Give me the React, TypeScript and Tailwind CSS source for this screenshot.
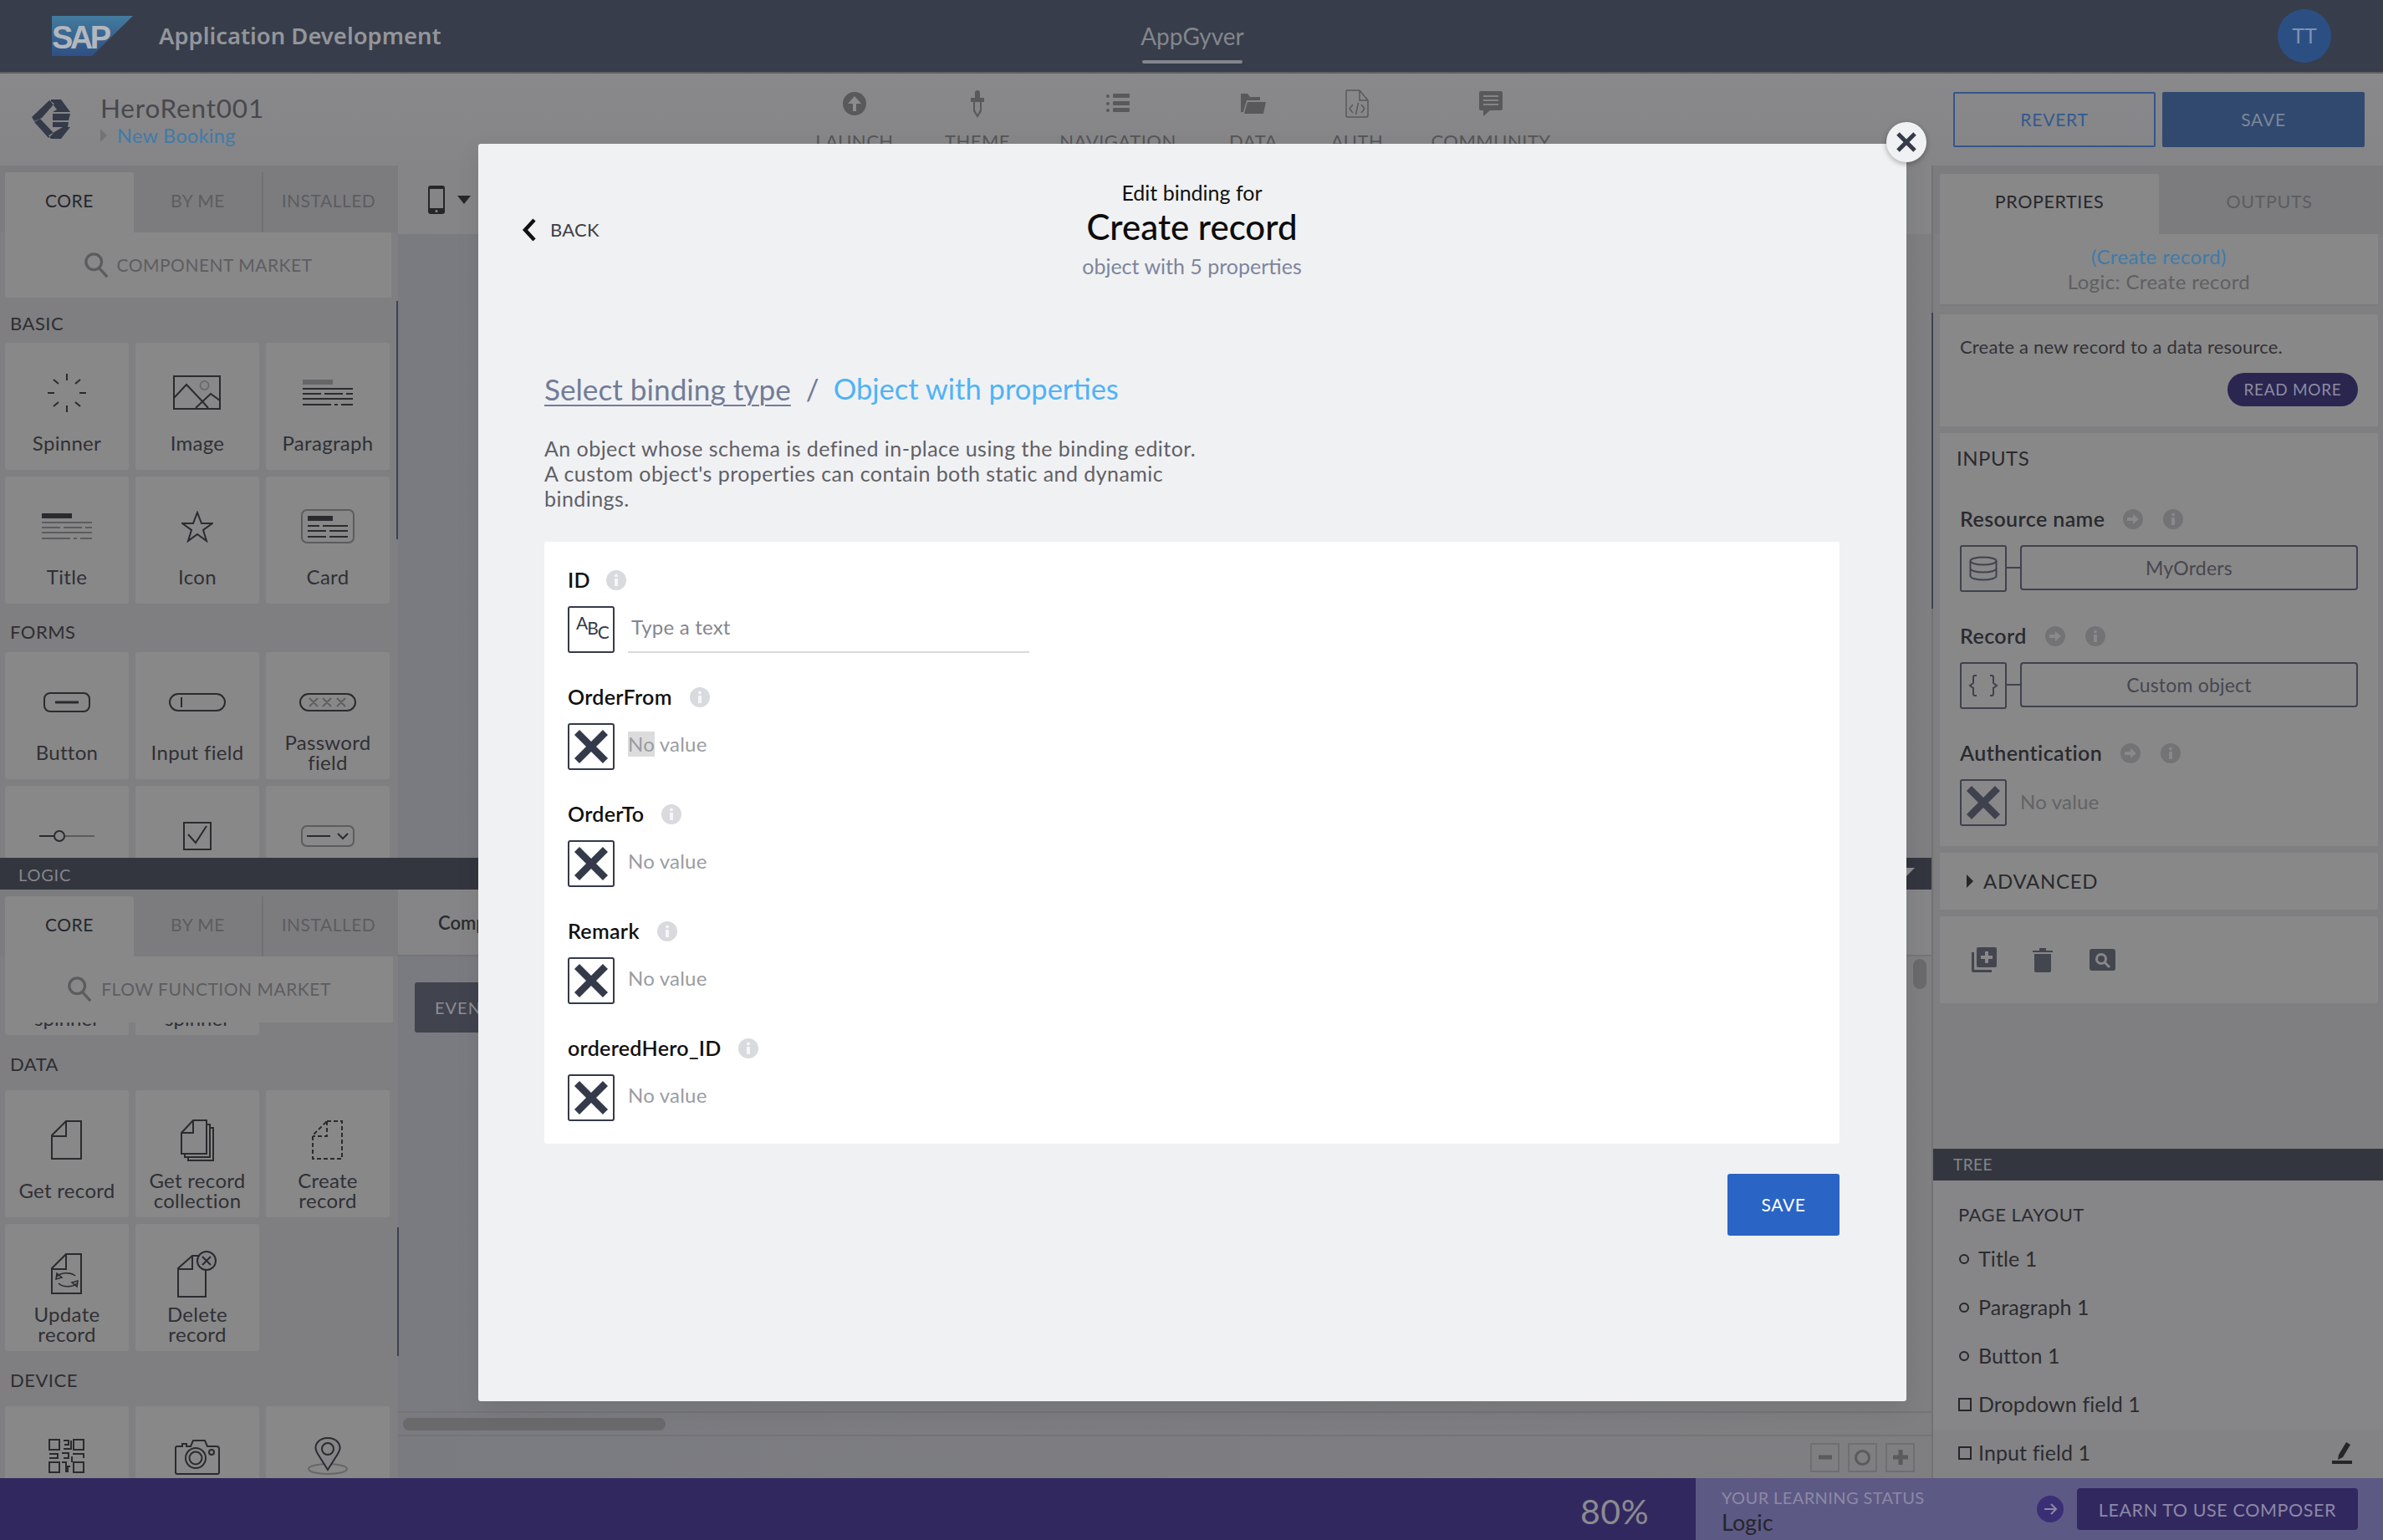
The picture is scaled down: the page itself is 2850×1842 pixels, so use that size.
import React from 'react';

const sans = { fontFamily: 'Lato, "Noto Sans", sans-serif' };

const Ink = '#2b2b2f';

// icons of the component library
const IconSpinner = () => (
  <svg width="48" height="48" viewBox="0 0 48 48" stroke={Ink} strokeWidth="2">
    <path d="M24 1v8M24 39v8M1 24h8M39 24h8M8 8l6 5M40 8l-6 5M8 40l6-5M40 40l-6-5" />
  </svg>
);
const IconImage = () => (
  <svg width="58" height="42" viewBox="0 0 58 42" fill="none" stroke={Ink} strokeWidth="2">
    <rect x="1" y="1" width="55" height="39" />
    <path d="M1 27L16 11l18 19 8 9M27 39l18-17 11 8" />
    <circle cx="37.500" cy="12" r="5" stroke="#6a6a6c" />
  </svg>
);
const TextLines = ({ head, body }: { head: string; body: string }) => (
  <svg width="60" height="32" viewBox="0 0 60 32" stroke={body} strokeWidth="2">
    <rect x="0" y="0" width="36" height="6" fill={head} stroke="none" />
    <path d="M0 11h60M0 17h22M26 17h22M52 17h8M0 23h60M0 30h34M38 30h4M46 30h14" />
  </svg>
);
const IconStar = () => (
  <svg width="38" height="38" viewBox="0 0 38 38" fill="none" stroke={Ink} strokeWidth="2">
    <path d="M19 2l5 13h13L26 23l4 13-11-8-11 8 4-13L1 15h13z" />
  </svg>
);
const IconCard = () => (
  <svg width="64" height="42" viewBox="0 0 64 42" fill="none">
    <rect x="1" y="1" width="62" height="39" rx="6" stroke="#5c5c5e" strokeWidth="2" />
    <rect x="8" y="8" width="30" height="6" fill={Ink} />
    <path d="M8 20h14M26 20h30M8 26h22M34 26h22M8 33h22M34 33h22" stroke={Ink} strokeWidth="2" />
  </svg>
);
const IconButton = () => (
  <svg width="56" height="24" viewBox="0 0 56 24" fill="none" stroke={Ink} strokeWidth="2">
    <rect x="1" y="1" width="54" height="22" rx="7" />
    <path d="M14 12h28" strokeWidth="3" />
  </svg>
);
const IconInput = () => (
  <svg width="68" height="22" viewBox="0 0 68 22" fill="none" stroke={Ink} strokeWidth="2">
    <rect x="1" y="1" width="66" height="20" rx="10" />
    <path d="M15 5v12" />
  </svg>
);
const IconPassword = () => (
  <svg width="68" height="22" viewBox="0 0 68 22" fill="none" stroke={Ink} strokeWidth="2">
    <rect x="1" y="1" width="66" height="20" rx="10" />
    <path d="M12 6l10 10M22 6L12 16M28 6l10 10M38 6L28 16M45 6l10 10M55 6L45 16" stroke="#5f5f61" />
  </svg>
);
const IconSlider = () => (
  <svg width="66" height="18" viewBox="0 0 66 18" fill="none">
    <path d="M0 9h18" stroke={Ink} strokeWidth="2" />
    <path d="M30 9h36" stroke="#5c5c5e" strokeWidth="2" />
    <circle cx="24" cy="9" r="6" stroke={Ink} strokeWidth="2" />
  </svg>
);
const IconCheckbox = () => (
  <svg width="34" height="34" viewBox="0 0 34 34" fill="none" stroke={Ink} strokeWidth="2">
    <rect x="1" y="1" width="32" height="32" />
    <path d="M6 15l9 10 13-20" />
  </svg>
);
const IconDropdown = () => (
  <svg width="64" height="26" viewBox="0 0 64 26" fill="none">
    <rect x="1" y="1" width="62" height="24" rx="6" stroke="#5c5c5e" strokeWidth="2" />
    <path d="M7 13h28M44 10l6 6 6-6" stroke={Ink} strokeWidth="2" />
  </svg>
);
const IconDoc = ({ dash }: { dash?: boolean }) => (
  <svg width="38" height="48" viewBox="0 0 38 48" fill="none" stroke={Ink} strokeWidth="2" strokeDasharray={dash ? '5 3' : undefined}>
    <path d="M18 1h18v45H1V18z" />
    <path d="M18 1v18H1" />
  </svg>
);
const IconDocs = () => (
  <svg width="40" height="50" viewBox="0 0 40 50" fill="none" stroke={Ink} strokeWidth="2">
    <path d="M15 1h16v40H1V16zM15 1v15H1" />
    <path d="M31 6h4v39H5v-4M35 10h4v39H9v-4" />
  </svg>
);
const IconUpdate = () => (
  <svg width="38" height="50" viewBox="0 0 38 50" fill="none" stroke={Ink} strokeWidth="2">
    <path d="M18 1h18v47H1V18z" />
    <path d="M18 1v18H1" />
    <path d="M7 28c4-5 16-6 22-1M31 36c-5 5-17 5-22 0" strokeWidth="1.500" />
    <path d="M7 24l6 5-7 2zM31 40l-6-5 7-2z" strokeWidth="1.500" />
  </svg>
);
const IconDelete = () => (
  <svg width="48" height="56" viewBox="0 0 48 56" fill="none" stroke={Ink} strokeWidth="2">
    <path d="M18 6h16v49H1V21zM18 6v16H1" />
    <circle cx="35" cy="12" r="11" fill="#868688" />
    <path d="M30 7l10 10M40 7L30 17" />
  </svg>
);
const IconQr = () => (
  <svg width="44" height="42" viewBox="0 0 44 42" fill="none" stroke={Ink} strokeWidth="2">
    <rect x="1" y="1" width="12" height="12" />
    <rect x="30" y="1" width="12" height="12" />
    <rect x="1" y="28" width="12" height="12" />
    <rect x="30" y="28" width="12" height="12" />
    <path d="M18 2h6v5h-5M27 2v10h-9M1 18h10v5H1M16 17h8v6h-6M29 18h13v5M28 21v7M16 28h5v12M26 33h-3v7" />
  </svg>
);
const IconCamera = () => (
  <svg width="54" height="44" viewBox="0 0 54 44" fill="none" stroke={Ink} strokeWidth="2">
    <path d="M3 10h6V7h5v3h5l3-7h14l3 7h11a3 3 0 013 3v28a2 2 0 01-2 2H3a2 2 0 01-2-2V12a2 2 0 012-2z" />
    <circle cx="25" cy="24" r="12" />
    <circle cx="25" cy="24" r="7.500" />
    <circle cx="44" cy="17" r="3" />
  </svg>
);
const IconPin = () => (
  <svg width="48" height="46" viewBox="0 0 48 46" fill="none" stroke={Ink} strokeWidth="2">
    <ellipse cx="24" cy="38" rx="23" ry="6" stroke="#666668" />
    <path fill="#868688" d="M24 39L12 20c-7-11 2-19 12-19s19 8 12 19z" />
    <circle cx="24" cy="14" r="7" />
  </svg>
);

const Tile = ({ label, icon }: { label: string; icon: React.ReactNode }) => (
  <div className="w-[148px] h-[152px] rounded-[3px] bg-[#888889] flex flex-col items-center shrink-0">
    <div className="mt-[24px] h-[72px] flex items-center justify-center">{icon}</div>
    <div className="h-[48px] flex items-center justify-center text-center text-[24px] leading-[24px] tracking-[0.3px] text-[#303034] px-2">{label}</div>
  </div>
);

const Row = ({ children }: { children: React.ReactNode }) => (
  <div className="flex gap-[8px] pl-[6px] mb-[8px]">{children}</div>
);

const Heading = ({ children, className }: { children: string; className: string }) => (
  <div className={`pl-[12px] text-[22px] leading-[24px] text-[#2e2e32] tracking-[0.5px] ${className}`}>{children}</div>
);

const LibTabs = () => (
  <div className="h-[80px] flex bg-[#7c7c7e] text-[21px] tracking-[0.5px] shrink-0">
    <div className="ml-[6px] mt-[8px] w-[154px] h-[72px] rounded-t-[3px] bg-[#888889] flex items-center justify-center pb-[4px] text-[#26262a]">CORE</div>
    <div className="w-[155px] mt-[8px] h-[72px] border-r-2 border-[#727274] flex items-center justify-center pb-[4px] text-[#5d5d60]">BY ME</div>
    <div className="flex-1 mt-[8px] h-[72px] flex items-center justify-center pb-[4px] pr-[5px] text-[#5d5d60]">INSTALLED</div>
  </div>
);

const SearchGlass = () => (
  <svg width="30" height="32" viewBox="0 0 32 34" fill="none" stroke="#5c5c5f" strokeWidth="3.500">
    <circle cx="13" cy="13" r="10" />
    <path d="M20 21l10 11" />
  </svg>
);

const NavItem = ({ w, label, icon }: { w: string; label: string; icon: React.ReactNode }) => (
  <div className={`${w} h-[110px] flex flex-col items-center text-[#555558] shrink-0`}>
    <div className="h-[36px] mt-[18px] flex items-center justify-center">{icon}</div>
    <div className="mt-[13px] text-[22px] leading-[28px] tracking-[0.5px]">{label}</div>
  </div>
);

const InfoDot = ({ bg, fg, className }: { bg: string; fg: string; className: string }) => (
  <svg className={className} width="24" height="24" viewBox="0 0 24 24">
    <circle cx="12" cy="12" r="12" fill={bg} />
    <circle cx="12" cy="6.500" r="2" fill={fg} />
    <rect x="10" y="10" width="4" height="9" fill={fg} />
  </svg>
);

const ArrowDot = ({ className }: { className: string }) => (
  <svg className={className} width="24" height="24" viewBox="0 0 24 24">
    <circle cx="12" cy="12" r="12" fill="#737375" />
    <path d="M5 10h7V6l7 6-7 6v-4H5z" fill="#89898b" />
  </svg>
);

const BoxX = ({ stroke = '#343a4a' }: { stroke?: string }) => (
  <div className="w-[56px] h-[56px] rounded-[3px] border-2 flex items-center justify-center shrink-0" style={{ borderColor: stroke }}>
    <svg width="42" height="42" viewBox="0 0 42 42" stroke={stroke} strokeWidth="8.500">
      <path d="M4 4l34 34M38 4L4 38" />
    </svg>
  </div>
);

const Field = ({ label, info, children }: { label: string; info: string; children: React.ReactNode }) => (
  <div className="h-[140px] flex flex-col">
    <div className="h-[28px] flex items-center text-[25px] font-semibold text-[#111] tracking-[0.3px]">
      <span>{label}</span>
      <InfoDot bg="#d8dade" fg="#f5f6f7" className={info} />
    </div>
    <div className="mt-[17px] flex items-center">{children}</div>
  </div>
);

const NoValue = ({ mark }: { mark?: boolean }) => (
  <div className="ml-[16px] h-[56px] pb-[6px] flex items-center text-[24px] tracking-[0.2px] text-[#9a9ca3]">
    {mark ? <span className="bg-[#dcdcdc] leading-[30px]">No</span> : <span>No</span>}
    <span>&nbsp;value</span>
  </div>
);

const PropLabel = ({ label }: { label: string }) => (
  <div className="h-[28px] flex items-center text-[25px] font-semibold text-[#2a2a2e] tracking-[0.4px]">
    <span>{label}</span>
    <ArrowDot className="ml-[22px]" />
    <InfoDot bg="#737375" fg="#89898b" className="ml-[24px]" />
  </div>
);

const BoundValue = ({ icon, text }: { icon: React.ReactNode; text: string }) => (
  <div className="flex items-start">
    <div className="w-[56px] h-[56px] rounded-[3px] border-2 border-[#3f424e] flex items-center justify-center">{icon}</div>
    <div className="w-[16px] h-[2px] bg-[#3f424e] mt-[26px]" />
    <div className="w-[404px] h-[54px] rounded-[4px] border-2 border-[#3f424e] flex items-center justify-center text-[23px] tracking-[0.2px] text-[#46474f]">{text}</div>
  </div>
);

const TreeRow = ({ label, square, active }: { label: string; square?: boolean; active?: boolean }) => (
  <div className={`h-[58px] pl-[30px] pb-[2px] flex items-center text-[25px] tracking-[0.1px] text-[#2c2c30] ${active ? 'bg-[#838385]' : ''}`}>
    {square ? (
      <div className="w-[16px] h-[16px] border-2 border-[#26262a] mr-[8px]" />
    ) : (
      <div className="w-[12px] h-[12px] rounded-full border-2 border-[#26262a] mx-[1px] mr-[11px]" />
    )}
    <span>{label}</span>
    {active && (
      <svg className="ml-auto mr-[36px]" width="26" height="26" viewBox="0 0 26 26" fill="#26262a">
        <path d="M18 0l5 3-9 15-6 3 1-6z" />
        <rect x="1" y="22" width="24" height="4" />
      </svg>
    )}
  </div>
);

const App = () => {
  return (
    <div className="relative w-[2850px] h-[1842px] overflow-hidden flex flex-col bg-[#7d7d80]" style={sans}>
      {/* top bar */}
      <div className="h-[88px] shrink-0 bg-[#373d4a] border-b-2 border-[#5d5f64] flex items-center">
        <svg className="ml-[62px]" width="97" height="48" viewBox="0 0 97 48">
          <defs>
            <linearGradient id="sapFill" x1="0" y1="0" x2="0" y2="1">
              <stop offset="0" stopColor="#437c9f" />
              <stop offset="1" stopColor="#2f4f84" />
            </linearGradient>
          </defs>
          <path d="M0 0h97L48 48H0z" fill="url(#sapFill)" />
          <text x="0" y="39" fontFamily="Liberation Sans" fontWeight="700" fontSize="38" letterSpacing="-3.500" fill="#b3b7bd">SAP</text>
        </svg>
        <div className="ml-[31px] w-[1176px] shrink-0 text-[27.400px] font-semibold text-[#93959b]" style={{ fontFamily: '"Noto Sans", sans-serif' }}>Application Development</div>
        <div className="relative h-[86px] w-[120px] shrink-0 flex items-center justify-center whitespace-nowrap text-[28px] text-[#83868d]">
          AppGyver
          <div className="absolute left-0 right-0 bottom-[10px] h-[4px] rounded-full bg-[#83868d]" />
        </div>
        <div className="ml-auto mr-[62px] w-[64px] h-[64px] rounded-full bg-[#2c4f83] flex items-center justify-center text-[25px] text-[#7f92ad]">TT</div>
      </div>

      {/* toolbar */}
      <div className="h-[110px] shrink-0 flex bg-gradient-to-b from-[#89898b] to-[#858587]">
        <div className="w-[949px] shrink-0 flex items-center pl-[38px]">
          <svg width="46" height="48" viewBox="0 0 46 48" fill="#343a48">
            <path d="M23 0h12l11 15H25l5-3-7-9zM25 17h21l-2 8H25zM25 27h19l-1 6H25zM46 33L35 47H23l-3-4 17-10zM21 1L0 21l3 5 9-4 15-17zM3 27l17 19 6-6-16-17z" />
          </svg>
          <div className="ml-[36px]">
            <div className="text-[31.500px] leading-[38px] text-[#48484c] tracking-[0.8px]">HeroRent001</div>
            <div className="flex items-center text-[23.500px] leading-[28px] text-[#3f7ba8] tracking-[0.3px]">
              <div className="w-0 h-0 border-y-[8px] border-y-transparent border-l-[8px] border-l-[#737375] mr-[12px]" />
              New Booking
            </div>
          </div>
        </div>
        <NavItem w="w-[146px]" label="LAUNCH" icon={
          <svg width="28" height="28" viewBox="0 0 28 28"><circle cx="14" cy="14" r="14" fill="#59595c" /><path d="M14 5l8 9h-6v9h-4v-9H6z" fill="#8c8c8e" /></svg>
        } />
        <NavItem w="w-[148px]" label="THEME" icon={
          <svg width="16" height="34" viewBox="0 0 16 34" fill="#59595c"><path d="M5 4a3 3 0 016 0v6h5v5h-3v11l-5 8-5-8V15H0v-5h5z" /><path d="M5 15h6v10l-3 5-3-5z" fill="#858587" /></svg>
        } />
        <NavItem w="w-[188px]" label="NAVIGATION" icon={
          <svg width="28" height="24" viewBox="0 0 28 24" fill="#59595c"><circle cx="2" cy="3" r="2" /><circle cx="2" cy="12" r="2" /><circle cx="2" cy="20" r="2" /><rect x="8" y="0" width="20" height="5" rx="1" /><rect x="8" y="9" width="20" height="5" rx="1" /><rect x="8" y="17" width="20" height="5" rx="1" /></svg>
        } />
        <NavItem w="w-[136px]" label="DATA" icon={
          <svg width="30" height="24" viewBox="0 0 30 24" fill="#59595c"><path d="M0 0h8l3 4h12v4H7L3 22H0z" /><path d="M8 10h22l-3 14H4z" /></svg>
        } />
        <NavItem w="w-[112px]" label="AUTH" icon={
          <svg width="28" height="34" viewBox="0 0 28 34" fill="none" stroke="#59595c" strokeWidth="1.500"><path d="M3 1h14l10 12v18a2 2 0 01-2 2H3a2 2 0 01-2-2V3a2 2 0 012-2zM17 1v12h10M9 18l-4 5 4 5M19 18l4 5-4 5M15.500 16l-3 14" /></svg>
        } />
        <NavItem w="w-[208px]" label="COMMUNITY" icon={
          <svg width="28" height="30" viewBox="0 0 28 30" fill="#59595c"><path d="M2 0h24a2 2 0 012 2v19a2 2 0 01-2 2H13l-8 7v-7H2a2 2 0 01-2-2V2a2 2 0 012-2z" /><path d="M5 6h18M5 11h18M5 16h18" stroke="#858587" strokeWidth="2" /></svg>
        } />
        <div className="ml-auto mr-[22px] mt-[22px] flex gap-[8px]">
          <div className="w-[242px] h-[66px] rounded-[2px] border-2 border-[#33558b] flex items-center justify-center text-[21px] tracking-[0.8px] text-[#335a90]">REVERT</div>
          <div className="w-[242px] h-[66px] rounded-[2px] bg-[#31496f] flex items-center justify-center text-[21px] tracking-[0.8px] text-[#7b8698]">SAVE</div>
        </div>
      </div>

      {/* workspace */}
      <div className="h-[1570px] shrink-0 flex">
        {/* left: libraries */}
        <div className="w-[476px] shrink-0 flex flex-col bg-[#7f7f81]">
          <div className="h-[828px] shrink-0 overflow-hidden">
            <LibTabs />
            <div className="ml-[6px] w-[462px] h-[78px] bg-[#888889] flex items-center justify-center text-[21px] text-[#5d5d60] tracking-[0.5px]">
              <SearchGlass />
              <span className="ml-[9px]">COMPONENT MARKET</span>
            </div>
            <Heading className="mt-[19px] mb-[11px]">BASIC</Heading>
            <Row>
              <Tile label="Spinner" icon={<IconSpinner />} />
              <Tile label="Image" icon={<IconImage />} />
              <Tile label="Paragraph" icon={<TextLines head="#666668" body={Ink} />} />
            </Row>
            <Row>
              <Tile label="Title" icon={<TextLines head={Ink} body="#5c5c5e" />} />
              <Tile label="Icon" icon={<IconStar />} />
              <Tile label="Card" icon={<IconCard />} />
            </Row>
            <Heading className="mt-[22px] mb-[12px]">FORMS</Heading>
            <Row>
              <Tile label="Button" icon={<IconButton />} />
              <Tile label="Input field" icon={<IconInput />} />
              <Tile label="Password field" icon={<IconPassword />} />
            </Row>
            <Row>
              <Tile label="Slider" icon={<IconSlider />} />
              <Tile label="Checkbox" icon={<IconCheckbox />} />
              <Tile label="Dropdown" icon={<IconDropdown />} />
            </Row>
          </div>
          <div className="h-[38px] shrink-0 bg-[#34363f] pl-[22px] pt-[2px] flex items-center text-[20px] tracking-[0.8px] text-[#85868b]">LOGIC</div>
          <div className="flex-1 overflow-hidden">
            <LibTabs />
            <div className="ml-[6px] w-[464px] h-[79px] pb-[2px] bg-[#888889] flex items-center justify-center text-[21px] text-[#5d5d60] tracking-[0.5px]">
              <SearchGlass />
              <span className="ml-[11px]">FLOW FUNCTION MARKET</span>
            </div>
            <div className="flex gap-[8px] pl-[6px]">
              <div className="w-[148px] h-[15px] rounded-b-[3px] bg-[#888889] overflow-hidden flex justify-center text-[24px] leading-[24px] text-[#303034]"><span className="-mt-[17px]">spinner</span></div>
              <div className="w-[148px] h-[15px] rounded-b-[3px] bg-[#888889] overflow-hidden flex justify-center text-[24px] leading-[24px] text-[#303034]"><span className="-mt-[17px]">spinner</span></div>
            </div>
            <Heading className="mt-[23px] mb-[19px]">DATA</Heading>
            <Row>
              <Tile label="Get record" icon={<IconDoc />} />
              <Tile label="Get record collection" icon={<IconDocs />} />
              <Tile label="Create record" icon={<IconDoc dash />} />
            </Row>
            <Row>
              <Tile label="Update record" icon={<IconUpdate />} />
              <Tile label="Delete record" icon={<IconDelete />} />
            </Row>
            <Heading className="mt-[23px] mb-[19px]">DEVICE</Heading>
            <Row>
              <Tile label="QR code" icon={<IconQr />} />
              <Tile label="Camera" icon={<IconCamera />} />
              <Tile label="Location" icon={<IconPin />} />
            </Row>
          </div>
        </div>

        {/* middle: canvas */}
        <div className="w-[1836px] shrink-0 flex flex-col bg-gradient-to-r from-[#7a7b80] to-[#7f7f82] border-r-2 border-[#727274]">
          <div className="h-[82px] shrink-0 bg-[#858587] pl-[36px] flex items-center">
            <svg width="20" height="34" viewBox="0 0 20 34"><rect x="0" y="0" width="20" height="34" rx="3" fill="#26262a" /><rect x="2" y="4" width="16" height="23" fill="#858587" /><circle cx="10" cy="30.500" r="1.500" fill="#858587" /></svg>
            <div className="ml-[15px] w-0 h-0 border-x-[8px] border-x-transparent border-t-[10px] border-t-[#26262a]" />
          </div>
          <div className="h-[746px] shrink-0" />
          <div className="h-[38px] shrink-0 bg-[#34363f] flex justify-end">
            <div className="w-[32px] h-[38px] flex items-start">
              <div className="w-0 h-0 mt-[12px] border-r-[12px] border-r-transparent border-t-[12px] border-t-[#8d8d90]" />
            </div>
          </div>
          <div className="h-[80px] shrink-0 bg-[#858587] border-b-2 border-[#747476] pl-[48px] flex items-center text-[22px] text-[#2b2b2f] font-semibold">Component</div>
          <div className="h-[544px] shrink-0 relative pl-[20px] pt-[31px]">
            <div className="w-[120px] h-[60px] rounded-[3px] bg-[#41434f] flex items-center pl-[24px] text-[20px] tracking-[1px] text-[#8c8d93]">EVENT</div>
            <div className="absolute right-[6px] top-[3px] w-[16px] h-[36px] rounded-full bg-[#6a6a6c]" />
          </div>
          <div className="h-[30px] shrink-0 border-y-2 border-[#747476] flex items-center pl-[6px]">
            <div className="w-[314px] h-[15px] rounded-full bg-[#6a6a6c]" />
          </div>
          <div className="flex-1 flex justify-end items-center pr-[20px] gap-[10px]">
            <div className="w-[35px] h-[35px] border-2 border-[#6f6f71] flex items-center justify-center">
              <svg width="20" height="20" viewBox="0 0 20 20" fill="none" stroke="#5b5b5e" strokeWidth="5"><path d="M2 10h16" /></svg>
            </div>
            <div className="w-[35px] h-[35px] border-2 border-[#6f6f71] flex items-center justify-center">
              <div className="w-[19px] h-[19px] rounded-full border-[3px] border-[#5b5b5e]" />
            </div>
            <div className="w-[35px] h-[35px] border-2 border-[#6f6f71] flex items-center justify-center">
              <svg width="20" height="20" viewBox="0 0 20 20" fill="none" stroke="#5b5b5e" strokeWidth="5"><path d="M1 10h18M10 1v18" /></svg>
            </div>
          </div>
        </div>

        {/* right: properties and tree */}
        <div className="flex-1 flex flex-col bg-[#7f7f81]">
          <div className="h-[82px] shrink-0 flex bg-[#7c7c7e] pl-[8px] text-[21.500px] tracking-[0.6px]">
            <div className="mt-[10px] w-[262px] h-[72px] rounded-t-[3px] bg-[#888889] flex items-center justify-center pb-[5px] text-[#27272b]">PROPERTIES</div>
            <div className="flex-1 mt-[10px] h-[72px] flex items-center justify-center pb-[5px] pr-[4px] text-[#5d5d60]">OUTPUTS</div>
          </div>
          <div className="mx-[8px] mr-[6px] h-[86px] bg-[#888889] border-b-2 border-[#7b7b7d] flex flex-col items-center justify-center text-[24px] leading-[30px] tracking-[0.4px]">
            <div className="text-[#3f7ba8]">(Create record)</div>
            <div className="text-[#5f5f62]">Logic: Create record</div>
          </div>
          <div className="mt-[10px] ml-[8px] mr-[6px] h-[134px] bg-[#888889] pl-[24px] pr-[24px] pt-[27px]">
            <div className="text-[22px] leading-[24px] tracking-[0.2px] text-[#323236]">Create a new record to a data resource.</div>
            <div className="mt-[19px] ml-auto w-[156px] h-[40px] rounded-full bg-[#2a2650] flex items-center justify-center text-[19px] tracking-[0.7px] text-[#8c8ca0]">READ MORE</div>
          </div>
          <div className="mt-[8px] ml-[8px] mr-[6px] h-[494px] bg-[#888889] pl-[24px] pt-[16px]">
            <div className="-ml-[4px] text-[24px] leading-[28px] tracking-[0.5px] text-[#2a2a2e]">INPUTS</div>
            <div className="mt-[45px]"><PropLabel label="Resource name" /></div>
            <div className="mt-[17px]">
              <BoundValue text="MyOrders" icon={
                <svg width="34" height="30" viewBox="0 0 34 30" fill="none" stroke="#3f424e" strokeWidth="2"><ellipse cx="17" cy="6" rx="15.500" ry="4.500" /><path d="M1.500 6v18c0 2.500 7 4.500 15.500 4.500s15.500-2 15.500-4.500V6M1.500 15c0 2.500 7 4.500 15.500 4.500s15.500-2 15.500-4.500" /></svg>
              } />
            </div>
            <div className="mt-[39px]"><PropLabel label="Record" /></div>
            <div className="mt-[17px]">
              <BoundValue text="Custom object" icon={
                <svg width="38" height="26" viewBox="0 0 38 26" fill="none" stroke="#3f424e" strokeWidth="2"><path d="M11 1H9a2 2 0 00-2 2v7l-4 3 4 3v7a2 2 0 002 2h2M27 1h2a2 2 0 012 2v7l4 3-4 3v7a2 2 0 01-2 2h-2" /></svg>
              } />
            </div>
            <div className="mt-[39px]"><PropLabel label="Authentication" /></div>
            <div className="mt-[17px] flex items-center">
              <BoxX stroke="#3f424e" />
              <div className="ml-[16px] pb-[3px] text-[24px] tracking-[0.2px] text-[#636365]">No value</div>
            </div>
          </div>
          <div className="mt-[8px] ml-[8px] mr-[6px] h-[68px] bg-[#888889] pl-[32px] flex items-center text-[24px] tracking-[0.7px] text-[#2a2a2e]">
            <div className="w-0 h-0 border-y-[8px] border-y-transparent border-l-[8px] border-l-[#26262a] mr-[12px]" />
            ADVANCED
          </div>
          <div className="mt-[8px] ml-[8px] mr-[6px] h-[104px] rounded-[3px] bg-[#888889] pl-[38px] flex items-center">
            <svg width="30" height="30" viewBox="0 0 30 30" fill="#43464f">
              <path d="M8 0h20a2 2 0 012 2v20a2 2 0 01-2 2H8a2 2 0 01-2-2V2a2 2 0 012-2z" />
              <path d="M0 6h3v21h21v3H2a2 2 0 01-2-2z" />
              <path d="M16 5h4v5h5v4h-5v5h-4v-5h-5v-4h5z" fill="#888889" />
            </svg>
            <svg className="ml-[43px]" width="24" height="30" viewBox="0 0 24 30" fill="#43464f">
              <path d="M0 4h8V1h8v3h8v2H0zM2 8h20v20a2 2 0 01-2 2H4a2 2 0 01-2-2z" />
            </svg>
            <svg className="ml-[44px]" width="31" height="26" viewBox="0 0 31 26">
              <rect width="31" height="26" rx="3" fill="#43464f" />
              <circle cx="14" cy="12" r="5.500" fill="none" stroke="#888889" strokeWidth="3" />
              <path d="M18 16l6 6" stroke="#888889" strokeWidth="3" />
            </svg>
          </div>
          <div className="flex-1" />
          <div className="h-[38px] shrink-0 bg-[#34363f] pl-[24px] flex items-center text-[19px] tracking-[0.5px] text-[#85868b]">TREE</div>
          <div className="h-[356px] shrink-0 bg-[#868688] flex flex-col">
            <div className="h-[64px] pt-[26px] pl-[30px] text-[22px] leading-[30px] tracking-[0.5px] text-[#2c2c30]">PAGE LAYOUT</div>
            <div className="h-[292px] flex flex-col justify-end">
              <TreeRow label="Title 1" />
              <TreeRow label="Paragraph 1" />
              <TreeRow label="Button 1" />
              <TreeRow label="Dropdown field 1" square />
              <TreeRow label="Input field 1" square active />
            </div>
          </div>
        </div>
      </div>

      {/* learning bar */}
      <div className="flex-1 flex bg-[#322860]">
        <div className="w-[1972px] shrink-0 pt-[5px] flex items-center justify-end text-[41px] text-[#8b8b8f] tracking-[0.5px]">80%</div>
        <div className="ml-[56px] flex-1 bg-[#5d5985] pl-[31px] flex items-center">
          <div className="pt-[8px]">
            <div className="text-[20px] leading-[24px] tracking-[0.4px] text-[#8c89a6]">YOUR LEARNING STATUS</div>
            <div className="text-[27px] leading-[36px] text-[#26262a]">Logic</div>
          </div>
          <svg className="ml-auto" width="32" height="32" viewBox="0 0 32 32" fill="none" stroke="#8c89a6" strokeWidth="2">
            <circle cx="16" cy="16" r="16" fill="#3a2f75" stroke="none" />
            <path d="M9 16h14M17 10l6 6-6 6" />
          </svg>
          <div className="ml-[16px] mr-[30px] w-[336px] h-[50px] rounded-[4px] bg-[#322860] pt-[2px] flex items-center justify-center text-[21.500px] tracking-[0.6px] text-[#8c89a6]">LEARN TO USE COMPOSER</div>
        </div>
      </div>

      {/* scroll marks in the panels */}
      <div className="absolute left-[474px] top-[360px] w-[2px] h-[285px] bg-[#3f424e]" />
      <div className="absolute left-[475px] top-[1468px] w-[2px] h-[154px] bg-[#3f424e]" />
      <div className="absolute left-[2310px] top-[374px] w-[2px] h-[354px] bg-[#3f424e]" />

      {/* modal */}
      <div className="absolute left-[572px] top-[172px] w-[1708px] h-[1504px] rounded-[3px] bg-[#f0f1f3] flex flex-col pl-[79px] pr-[80px] shadow-[0_10px_30px_rgba(0,0,0,0.08)]">
        <div className="h-[172px] relative flex flex-col items-center pt-[40px]">
          <div className="text-[25px] leading-[36px] text-[#111]">Edit binding for</div>
          <div className="text-[42px] leading-[46px] font-medium text-[#0c0c0c]">Create record</div>
          <div className="mt-[9px] text-[25px] leading-[30px] text-[#7d859c]">object with 5 properties</div>
          <div className="absolute left-[-28px] top-[86px] flex items-center">
            <svg width="20" height="30" viewBox="0 0 20 30" fill="none" stroke="#111" strokeWidth="4.500"><path d="M16 3L5 15l11 12" /></svg>
            <span className="ml-[15px] text-[22px] tracking-[0.3px] text-[#404045]">BACK</span>
          </div>
        </div>
        <div className="mt-[99px] flex items-center leading-[44px]">
          <span className="text-[35.200px] underline underline-offset-[5px] decoration-[2px] text-[#727c97]">Select binding type</span>
          <span className="ml-[18px] text-[35px] text-[#6f7a96]">/</span>
          <span className="ml-[17px] text-[34.500px] text-[#4fb3f6]">Object with properties</span>
        </div>
        <div className="mt-[34px] w-[800px] text-[25px] leading-[30px] tracking-[0.45px] text-[#5f6066]">
          An object whose schema is defined in-place using the binding editor.<br />
          A custom object's properties can contain both static and dynamic bindings.
        </div>
        <div className="mt-[37px] h-[720px] rounded-[3px] bg-white pl-[28px] pt-[32px]">
          <Field label="ID" info="ml-[19px]">
            <div className="w-[56px] h-[56px] rounded-[3px] border-2 border-[#343a4a] flex items-start pl-[8px] pt-[6px] text-[21px] leading-[24px] text-[#343a4a]">
              <span>A</span><span className="mt-[6px] -ml-[1px]">B</span><span className="mt-[11px] -ml-[1px]">C</span>
            </div>
            <div className="ml-[16px] w-[480px] h-[56px] border-b-2 border-[#d8d9de] pl-[4px] pb-[4px] flex items-center text-[24px] tracking-[0.2px] text-[#85868c]">Type a text</div>
          </Field>
          <Field label="OrderFrom" info="ml-[21px]"><BoxX /><NoValue mark /></Field>
          <Field label="OrderTo" info="ml-[21px]"><BoxX /><NoValue /></Field>
          <Field label="Remark" info="ml-[21px]"><BoxX /><NoValue /></Field>
          <Field label="orderedHero_ID" info="ml-[20px]"><BoxX /><NoValue /></Field>
        </div>
        <div className="mt-[36px] self-end w-[134px] h-[74px] rounded-[3px] bg-[#2a64c5] flex items-center justify-center text-[21px] tracking-[0.6px] text-white">SAVE</div>
      </div>

      {/* close */}
      <div className="absolute left-[2256px] top-[146px] w-[48px] h-[48px] rounded-full bg-[#f0f1f3] flex items-center justify-center shadow-[0_2px_6px_rgba(0,0,0,0.3)]">
        <svg width="24" height="24" viewBox="0 0 24 24" stroke="#353b49" strokeWidth="5"><path d="M2 2l20 20M22 2L2 22" /></svg>
      </div>
    </div>
  );
};

export default App;
